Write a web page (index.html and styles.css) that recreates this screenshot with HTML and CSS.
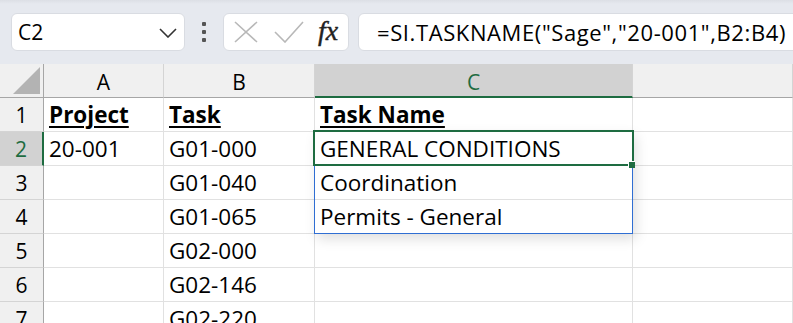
FILE: index.html
```html
<!DOCTYPE html>
<html lang="en">
  <head>
    <meta charset="UTF-8" />
    <meta name="viewport" content="width=device-width, initial-scale=1.0" />
    <title>Sheet</title>
    <link rel="stylesheet" href="styles.css">
  </head>
  <body>
    <div class="toolbar">
      <div class="name-box">
        <span>C2</span>
        <svg class="chevron" width="18" height="10" viewBox="0 0 18 10">
          <path d="M1 1 L9 9 L17 1" fill="none" stroke="#333" stroke-width="1.6" />
        </svg>
      </div>
      <div class="kebab"><i></i><i></i><i></i></div>
      <div class="fx-box">
        <svg width="24" height="22" viewBox="0 0 24 22">
          <path d="M1 1 L23 21 M23 1 L1 21" stroke="#b8b8b8" stroke-width="1.6" />
        </svg>
        <svg width="30" height="22" viewBox="0 0 30 22">
          <path d="M1 11 L11 21 L29 1" fill="none" stroke="#b8b8b8" stroke-width="1.6" />
        </svg>
        <span class="fx">fx</span>
      </div>
      <div class="formula">=SI.TASKNAME("Sage","20-001",B2:B4)</div>
    </div>

    <div class="sheet">
      <div class="grid">
        <div class="corner">
          <svg width="27" height="27" viewBox="0 0 27 27"><polygon points="27,0 27,27 0,27" fill="#b3b3b3" /></svg>
        </div>
        <div class="col-head">A</div>
        <div class="col-head">B</div>
        <div class="col-head current">C</div>
        <div class="col-head"></div>

        <div class="row-head">1</div>
        <div class="cell"><b>Project</b></div>
        <div class="cell"><b>Task</b></div>
        <div class="cell"><b>Task Name</b></div>
        <div class="cell"></div>

        <div class="row-head current">2</div>
        <div class="cell">20-001</div>
        <div class="cell">G01-000</div>
        <div class="cell">GENERAL CONDITIONS</div>
        <div class="cell"></div>

        <div class="row-head">3</div>
        <div class="cell"></div>
        <div class="cell">G01-040</div>
        <div class="cell">Coordination</div>
        <div class="cell"></div>

        <div class="row-head">4</div>
        <div class="cell"></div>
        <div class="cell">G01-065</div>
        <div class="cell">Permits - General</div>
        <div class="cell"></div>

        <div class="row-head">5</div>
        <div class="cell"></div>
        <div class="cell">G02-000</div>
        <div class="cell"></div>
        <div class="cell"></div>

        <div class="row-head">6</div>
        <div class="cell"></div>
        <div class="cell">G02-146</div>
        <div class="cell"></div>
        <div class="cell"></div>

        <div class="row-head">7</div>
        <div class="cell"></div>
        <div class="cell">G02-220</div>
        <div class="cell"></div>
        <div class="cell"></div>
      </div>
      <div class="spill"></div>
      <div class="active-cell"><span class="handle"></span></div>
    </div>
  </body>
</html>
```

FILE: styles.css
```css
body {
  margin: 0;
  overflow: hidden;
  font-family: "Open Sans", "Liberation Sans", sans-serif;
  color: #000;
  background: #fff;
}
.toolbar {
  height: 64px;
  box-sizing: border-box;
  background: linear-gradient(#dcdfe5, #e6e9ef 4px);
  display: flex;
  align-items: flex-start;
  padding: 13px 0 0 11px;
  white-space: nowrap;
}
.toolbar > * {
  flex-shrink: 0;
}
.name-box,
.fx-box,
.formula {
  height: 38px;
  box-sizing: border-box;
  background: #fff;
  border: 1px solid #d9dce2;
  border-radius: 6px;
  display: flex;
  align-items: center;
}
.name-box {
  width: 174px;
  padding: 0 7px 0 6px;
  justify-content: space-between;
  font-size: 21px;
}
.chevron {
  margin-top: 2px;
}
.kebab {
  width: 38px;
  height: 38px;
  display: flex;
  flex-direction: column;
  align-items: center;
  justify-content: center;
  gap: 4px;
}
.kebab i {
  width: 4px;
  height: 4px;
  background: #555;
  border-radius: 1px;
}
.fx-box {
  width: 126px;
  padding: 0 8px 0 10px;
  gap: 17px;
}
.fx-box svg + svg {
  margin-left: -1px;
}
.fx {
  font-family: "Liberation Serif", "DejaVu Serif", serif;
  font-style: italic;
  font-size: 28px;
  margin-left: -3px;
  margin-top: -3px;
  color: #222;
  -webkit-text-stroke: 0.4px #222;
}
.formula {
  margin-left: 9px;
  width: 460px;
  padding-left: 18px;
  font-size: 22px;
  letter-spacing: 0.6px;
}

.sheet {
  position: relative;
}
.grid {
  display: grid;
  grid-template-columns: 44px 120px 151px 318px 1fr;
  grid-auto-rows: 34px;
  font-size: 22.5px;
  line-height: 34px;
}
.corner,
.col-head {
  background: #f0f0f0;
  border-bottom: 1px solid #a6a6a6;
  border-right: 1px solid #d4d4d4;
}
.corner {
  border-right-color: #a6a6a6;
  display: flex;
  align-items: flex-end;
  justify-content: flex-end;
  padding: 0 3px 3px 0;
  box-sizing: border-box;
}
.col-head {
  text-align: center;
  font-size: 21px;
  line-height: 36px;
}
.col-head.current {
  background: #d2d2d2;
  color: #1e6c41;
  border-bottom: 2px solid #1e6c41;
}
.row-head {
  background: #f0f0f0;
  border-right: 1px solid #a6a6a6;
  border-bottom: 1px solid #d4d4d4;
  text-align: center;
  font-size: 21px;
}
.row-head.current {
  background: #d2d2d2;
  color: #1e6c41;
  border-right: 2px solid #1e6c41;
}
.cell {
  border-right: 1px solid #e1e1e1;
  border-bottom: 1px solid #e1e1e1;
  padding-left: 5px;
  white-space: nowrap;
  overflow: hidden;
}
.cell b {
  text-decoration: underline;
  text-decoration-thickness: 2px;
  text-underline-offset: 3px;
}

/* overlays on the grid */
.spill {
  position: absolute;
  left: 314px;
  top: 67px;
  width: 319px;
  height: 103px;
  box-sizing: border-box;
  border: 1px solid #2f6ed3;
  box-shadow: 3px 5px 12px rgba(0, 0, 0, 0.13);
}
.active-cell {
  position: absolute;
  left: 313px;
  top: 66px;
  width: 321px;
  height: 36px;
  box-sizing: border-box;
  border: 2px solid #1e6c41;
}
.handle {
  position: absolute;
  right: -3px;
  bottom: -4px;
  width: 6px;
  height: 6px;
  background: #1e6c41;
  border: 1px solid #fff;
  border-width: 1px 0 0 1px;
}
```
